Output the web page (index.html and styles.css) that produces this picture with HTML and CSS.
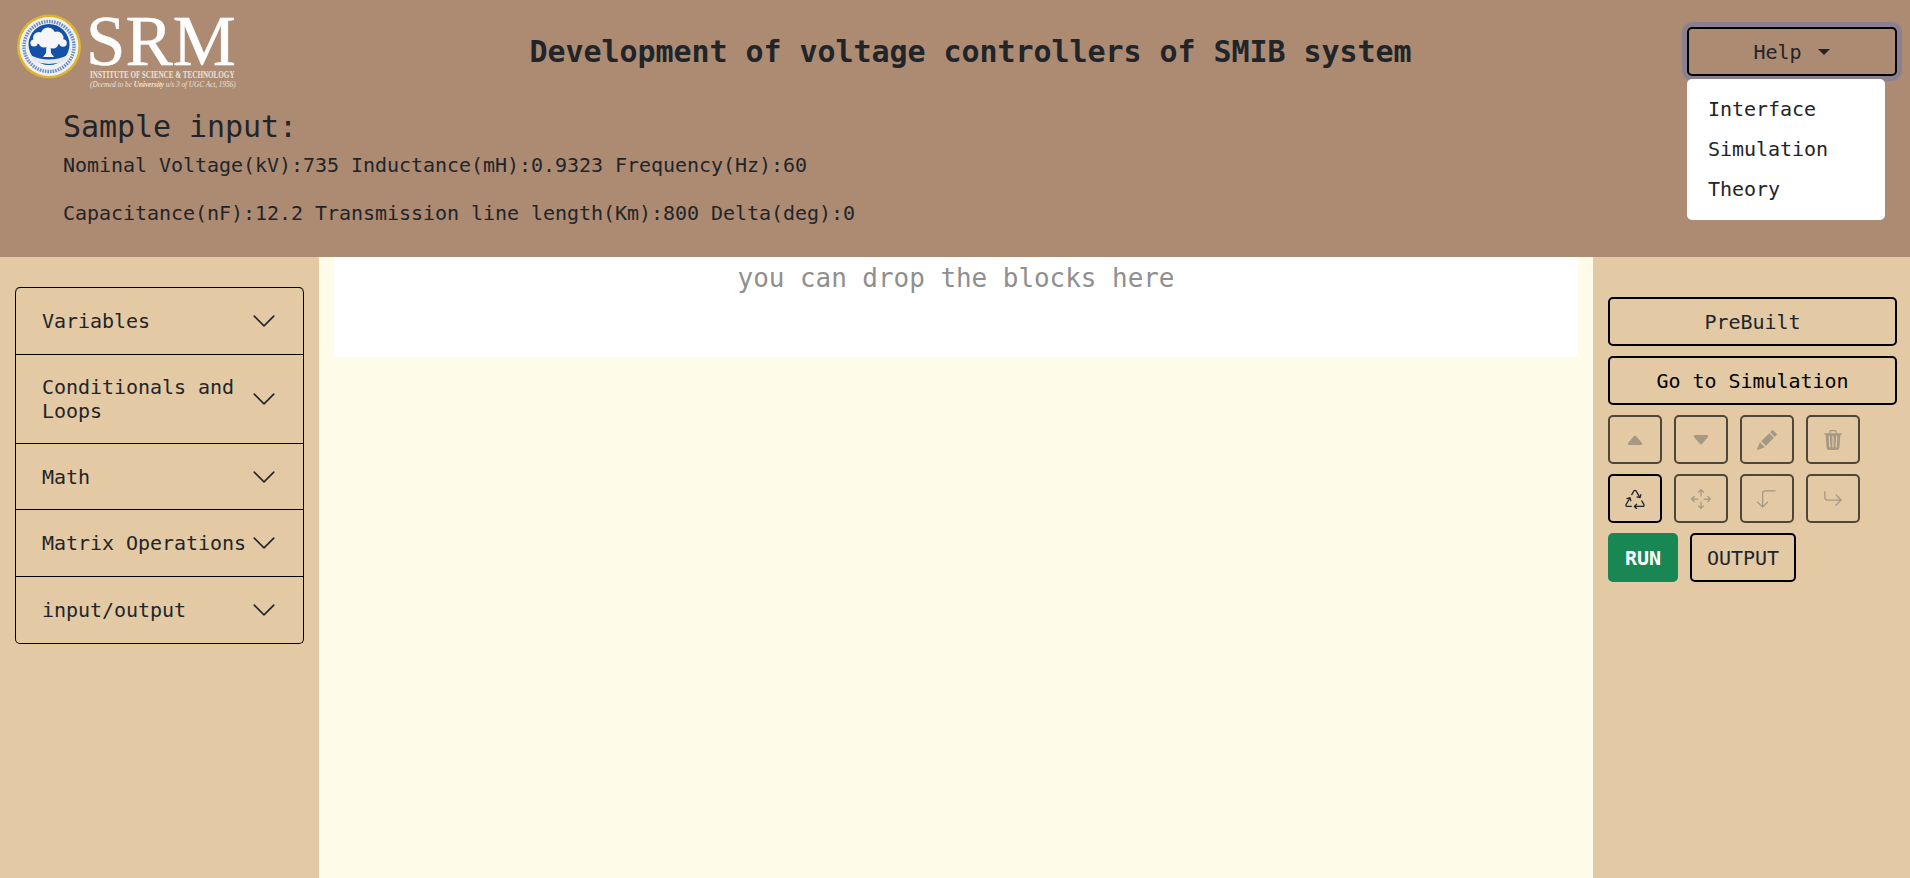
FILE: index.html
```html
<!DOCTYPE html>
<html lang="en">
<head>
<meta charset="utf-8">
<title>Development of voltage controllers of SMIB system</title>
<link rel="stylesheet" href="styles.css">
</head>
<body>
<div class="app">
  <header class="header">
    <div class="top-row">
      <svg class="logo" viewBox="15 0 239 93" aria-label="SRM logo">
        <circle cx="49" cy="46.5" r="32" fill="#dcb42e"/>
        <circle cx="49" cy="46.5" r="29.5" fill="#eef0f2"/>
        <circle cx="49" cy="46.5" r="25" fill="none" stroke="#6f8fc4" stroke-width="3.4" stroke-dasharray="1.6 1"/>
        <circle cx="49" cy="44.5" r="20.5" fill="#1450a8"/>
        <path d="M30 55q19 9 38 0l-3 6q-16 6-32 0z" fill="#e6e8ec"/>
        <g fill="#f4f6fa">
          <circle cx="48" cy="35" r="7.5"/><circle cx="39" cy="38" r="6"/><circle cx="57" cy="38" r="6.5"/>
          <circle cx="34" cy="43" r="3.6"/><circle cx="63" cy="43" r="3.8"/><circle cx="44" cy="42" r="5.5"/><circle cx="53" cy="43" r="5.5"/>
          <path d="M46.5 44h4l.5 9 3 4h-11l3-4z"/>
        </g>
        <text class="logo-srm" x="86" y="64.5">SRM</text>
        <text class="logo-inst" transform="translate(90 77.5) scale(.75 1)">INSTITUTE OF SCIENCE &amp; TECHNOLOGY</text>
        <text class="logo-tag" transform="translate(90 86.5)">(Deemed to be <tspan class="logo-tag-strong">University</tspan> u/s 3 of UGC Act, 1956)</text>
      </svg>
      <h1 class="title">Development of voltage controllers of SMIB system</h1>
      <div class="help">
        <button class="btn help-btn" type="button">Help <span class="caret"></span></button>
        <ul class="help-menu">
          <li>Interface</li>
          <li>Simulation</li>
          <li>Theory</li>
        </ul>
      </div>
    </div>
    <div class="sample">
      <h3 class="sample-title">Sample input:</h3>
      <p class="sample-line">Nominal Voltage(kV):735 Inductance(mH):0.9323 Frequency(Hz):60</p>
      <p class="sample-line">Capacitance(nF):12.2 Transmission line length(Km):800 Delta(deg):0</p>
    </div>
  </header>
  <div class="body-row">
    <aside class="left">
      <div class="accordion">
        <div class="acc-item"><span class="acc-label">Variables</span><svg class="chev" viewBox="0 0 16 16"><path d="M1.646 4.646a.5.5 0 0 1 .708 0L8 10.293l5.646-5.647a.5.5 0 0 1 .708.708l-6 6a.5.5 0 0 1-.708 0l-6-6a.5.5 0 0 1 0-.708z"/></svg></div>
        <div class="acc-item"><span class="acc-label">Conditionals and Loops</span><svg class="chev" viewBox="0 0 16 16"><path d="M1.646 4.646a.5.5 0 0 1 .708 0L8 10.293l5.646-5.647a.5.5 0 0 1 .708.708l-6 6a.5.5 0 0 1-.708 0l-6-6a.5.5 0 0 1 0-.708z"/></svg></div>
        <div class="acc-item acc-short"><span class="acc-label">Math</span><svg class="chev" viewBox="0 0 16 16"><path d="M1.646 4.646a.5.5 0 0 1 .708 0L8 10.293l5.646-5.647a.5.5 0 0 1 .708.708l-6 6a.5.5 0 0 1-.708 0l-6-6a.5.5 0 0 1 0-.708z"/></svg></div>
        <div class="acc-item"><span class="acc-label">Matrix Operations</span><svg class="chev" viewBox="0 0 16 16"><path d="M1.646 4.646a.5.5 0 0 1 .708 0L8 10.293l5.646-5.647a.5.5 0 0 1 .708.708l-6 6a.5.5 0 0 1-.708 0l-6-6a.5.5 0 0 1 0-.708z"/></svg></div>
        <div class="acc-item"><span class="acc-label">input/output</span><svg class="chev" viewBox="0 0 16 16"><path d="M1.646 4.646a.5.5 0 0 1 .708 0L8 10.293l5.646-5.647a.5.5 0 0 1 .708.708l-6 6a.5.5 0 0 1-.708 0l-6-6a.5.5 0 0 1 0-.708z"/></svg></div>
      </div>
    </aside>
    <main class="canvas">
      <div class="dropzone">you can drop the blocks here</div>
    </main>
    <aside class="right">
      <button class="btn btn-full" type="button">PreBuilt</button>
      <button class="btn btn-full btn-strong" type="button">Go to Simulation</button>
      <div class="tool-row">
        <button class="btn tool" type="button" disabled><svg class="ico" viewBox="0 0 16 16"><path d="m7.247 4.86-4.796 5.481c-.566.647-.106 1.659.753 1.659h9.592a1 1 0 0 0 .753-1.659l-4.796-5.48a1 1 0 0 0-1.506 0z"/></svg></button>
        <button class="btn tool" type="button" disabled><svg class="ico" viewBox="0 0 16 16"><path d="M7.247 11.14 2.451 5.658C1.885 5.013 2.345 4 3.204 4h9.592a1 1 0 0 1 .753 1.659l-4.796 5.48a1 1 0 0 1-1.506 0z"/></svg></button>
        <button class="btn tool" type="button" disabled><svg class="ico" viewBox="0 0 16 16"><path d="M12.854.146a.5.5 0 0 0-.707 0L10.5 1.793 14.207 5.5l1.647-1.646a.5.5 0 0 0 0-.708l-3-3zm.646 6.061L9.793 2.5 3.293 9H3.5a.5.5 0 0 1 .5.5v.5h.5a.5.5 0 0 1 .5.5v.5h.5a.5.5 0 0 1 .5.5v.5h.5a.5.5 0 0 1 .5.5v.207l6.5-6.5zm-7.468 7.468A.5.5 0 0 1 6 13.5V13h-.5a.5.5 0 0 1-.5-.5V12h-.5a.5.5 0 0 1-.5-.5V11h-.5a.5.5 0 0 1-.5-.5V10h-.5a.499.499 0 0 1-.175-.032l-.179.178a.5.5 0 0 0-.11.168l-2 5a.5.5 0 0 0 .65.65l5-2a.5.5 0 0 0 .168-.11l.178-.178z"/></svg></button>
        <button class="btn tool" type="button" disabled><svg class="ico" viewBox="0 0 16 16"><path d="M11 1.5v1h3.5a.5.5 0 0 1 0 1h-.538l-.853 10.66A2 2 0 0 1 11.115 16h-6.23a2 2 0 0 1-1.994-1.84L2.038 3.5H1.5a.5.5 0 0 1 0-1H5v-1A1.5 1.5 0 0 1 6.5 0h3A1.5 1.5 0 0 1 11 1.5Zm-5 0v1h4v-1a.5.5 0 0 0-.5-.5h-3a.5.5 0 0 0-.5.5ZM4.5 5.029l.5 8.5a.5.5 0 1 0 .998-.06l-.5-8.5a.5.5 0 1 0-.998.06Zm6.53-.528a.5.5 0 0 0-.528.47l-.5 8.5a.5.5 0 0 0 .998.058l.5-8.5a.5.5 0 0 0-.47-.528ZM8 4.5a.5.5 0 0 0-.5.5v8.5a.5.5 0 0 0 1 0V5a.5.5 0 0 0-.5-.5Z"/></svg></button>
      </div>
      <div class="tool-row">
        <button class="btn tool" type="button"><svg class="ico ico-dark" viewBox="0 0 16 16"><path d="M9.302 1.256a1.5 1.5 0 0 0-2.604 0l-1.704 2.98a.5.5 0 0 0 .869.497l1.703-2.981a.5.5 0 0 1 .868 0l2.54 4.444-1.256-.337a.5.5 0 1 0-.26.966l2.415.647a.5.5 0 0 0 .613-.353l.647-2.415a.5.5 0 1 0-.966-.259l-.333 1.242-2.532-4.431zM2.973 7.773l-1.255.337a.5.5 0 1 1-.26-.966l2.416-.647a.5.5 0 0 1 .612.353l.647 2.415a.5.5 0 0 1-.966.259l-.333-1.242-2.545 4.454a.5.5 0 0 0 .434.748H5a.5.5 0 0 1 0 1H1.723A1.5 1.5 0 0 1 .421 12.24l2.552-4.467zm10.89 1.463a.5.5 0 1 0-.868.496l1.716 3.004a.5.5 0 0 1-.434.748h-5.57l.92-.92a.5.5 0 0 0-.707-.707l-1.768 1.767a.5.5 0 0 0 0 .708l1.768 1.767a.5.5 0 0 0 .707-.707l-.92-.92h5.57a1.5 1.5 0 0 0 1.302-2.244l-1.716-3.004z"/></svg></button>
        <button class="btn tool" type="button" disabled><svg class="ico" viewBox="0 0 16 16"><path d="M7.646.146a.5.5 0 0 1 .708 0l2 2a.5.5 0 0 1-.708.708L8.5 1.707V5.5a.5.5 0 0 1-1 0V1.707L6.354 2.854a.5.5 0 1 1-.708-.708l2-2zM8 10a.5.5 0 0 1 .5.5v3.793l1.146-1.147a.5.5 0 0 1 .708.708l-2 2a.5.5 0 0 1-.708 0l-2-2a.5.5 0 0 1 .708-.708L7.5 14.293V10.5A.5.5 0 0 1 8 10zM.146 8.354a.5.5 0 0 1 0-.708l2-2a.5.5 0 1 1 .708.708L1.707 7.5H5.5a.5.5 0 0 1 0 1H1.707l1.147 1.146a.5.5 0 0 1-.708.708l-2-2zM10 8a.5.5 0 0 1 .5-.5h3.793l-1.147-1.146a.5.5 0 0 1 .708-.708l2 2a.5.5 0 0 1 0 .708l-2 2a.5.5 0 0 1-.708-.708L14.293 8.5H10.5A.5.5 0 0 1 10 8z"/></svg></button>
        <button class="btn tool" type="button" disabled><svg class="ico" viewBox="0 0 16 16"><path d="M4.854 14.854a.5.5 0 0 1-.708 0l-4-4a.5.5 0 0 1 .708-.708L4 13.293V3.5A2.5 2.5 0 0 1 6.5 1h8a.5.5 0 0 1 0 1h-8A1.5 1.5 0 0 0 5 3.5v9.793l3.146-3.147a.5.5 0 0 1 .708.708l-4 4z"/></svg></button>
        <button class="btn tool" type="button" disabled><svg class="ico" viewBox="0 0 16 16"><path d="M1.5 1.5A.5.5 0 0 0 1 2v4.8a2.5 2.5 0 0 0 2.5 2.5h9.793l-3.347 3.346a.5.5 0 0 0 .708.708l4.2-4.2a.5.5 0 0 0 0-.708l-4-4a.5.5 0 0 0-.708.708L13.293 8.3H3.5A1.5 1.5 0 0 1 2 6.8V2a.5.5 0 0 0-.5-.5z"/></svg></button>
      </div>
      <div class="tool-row">
        <button class="btn btn-run" type="button">RUN</button>
        <button class="btn" type="button">OUTPUT</button>
      </div>
    </aside>
  </div>
</div>
</body>
</html>
```
FILE: styles.css
```css
* { box-sizing: border-box; }
html, body { margin: 0; padding: 0; }
body {
  font-family: "DejaVu Sans Mono", "Liberation Mono", monospace;
  font-size: 20px;
  line-height: 30px;
  letter-spacing: -.04px;
  color: #212529;
  background: #fffbe9;
  overflow: hidden;
}
.app {
  display: grid;
  grid-template-rows: 257px 1fr;
  height: 100vh;
}
.header {
  background: #ad8b73;
  padding: 0 13px 0 15px;
}
.top-row {
  display: flex;
  align-items: center;
  justify-content: space-between;
  height: 93px;
  padding-top: 10px;
}
.logo { width: 239px; height: 93px; margin-top: -10px; display: block; }
.logo text { letter-spacing: 0; }
.logo-srm { font-family: "Liberation Serif", serif; font-size: 71px; fill: #fff; stroke: #fff; stroke-width: .5px; }
.logo-inst { font-family: "Liberation Serif", serif; font-size: 9.5px; font-weight: 700; fill: #ece3da; }
.logo-tag { font-family: "Liberation Serif", serif; font-size: 7.2px; font-style: italic; fill: #ece3da; }
.logo-tag-strong { font-weight: 700; }
.title {
  margin: 0;
  font-size: 30px;
  line-height: 36px;
  font-weight: 700;
  letter-spacing: -.06px;
}
.help { position: relative; width: 210px; }
.btn {
  font-family: inherit;
  font-size: 20px;
  line-height: 30px;
  letter-spacing: inherit;
  color: #212529;
  background: transparent;
  border: 2px solid #000;
  border-radius: 5px;
  padding: 7.5px 15px;
  height: 49px;
  white-space: nowrap;
}
.help-btn {
  width: 100%;
  box-shadow: 0 0 0 5px #8a8090;
}
.caret {
  display: inline-block;
  margin-left: 5px;
  vertical-align: 4px;
  border-top: 6px solid #212529;
  border-left: 6px solid transparent;
  border-right: 6px solid transparent;
}
.help-menu {
  position: absolute;
  top: calc(100% + 3px);
  left: 0;
  width: 198px;
  margin: 0;
  padding: 10px 0 11px;
  list-style: none;
  background: #fff;
  border-radius: 5px;
}
.help-menu li {
  padding: 5px 21px;
  height: 40px;
}
.sample { margin: 16px 0 0 48px; }
.sample-title {
  margin: 0 0 5px;
  font-size: 30px;
  line-height: 36px;
  font-weight: 400;
  letter-spacing: -.06px;
}
.sample-line { margin: 0 0 18px; }
.body-row {
  display: grid;
  grid-template-columns: 319px 1fr 317px;
  min-height: 0;
}
.left {
  background: #e3caa5;
  padding: 30px 15px;
}
.accordion {
  border-top: 1px solid #000;
  border-radius: 5px;
}
.acc-item {
  display: flex;
  align-items: center;
  justify-content: space-between;
  min-height: 67px;
  padding: 20px 26px;
  line-height: 24px;
  border: 1px solid #000;
  border-top: 0;
}
.acc-short { min-height: 66px; }
.acc-item:first-child { border-radius: 5px 5px 0 0; }
.acc-item:last-child { border-radius: 0 0 5px 5px; }
.acc-label { flex: 1; min-width: 0; }
.chev {
  flex: none;
  width: 26px;
  height: 26px;
  margin: -1px 0;
  fill: #212529;
}
.canvas {
  background: #fffbe9;
  padding: 0 15px;
}
.dropzone {
  height: 100px;
  background: #fff;
  color: #8f8f8f;
  font-size: 26px;
  line-height: 42px;
  letter-spacing: -.05px;
  text-align: center;
}
.right {
  background: #e3caa5;
  padding: 40px 13px 0 15px;
  display: flex;
  flex-direction: column;
  gap: 10px;
}
.btn-full { width: 100%; }
.btn-strong { color: #000; }
.tool-row { display: flex; gap: 12px; }
.tool {
  width: 54px;
  padding: 0;
  display: flex;
  align-items: center;
  justify-content: center;
}
.tool:disabled { opacity: .65; }
.ico { width: 20px; height: 20px; fill: #847f72; display: block; }
.ico-dark { fill: #212529; }
.btn-run {
  background: #198754;
  border-color: #198754;
  color: #fff;
  font-weight: 700;
}
```
